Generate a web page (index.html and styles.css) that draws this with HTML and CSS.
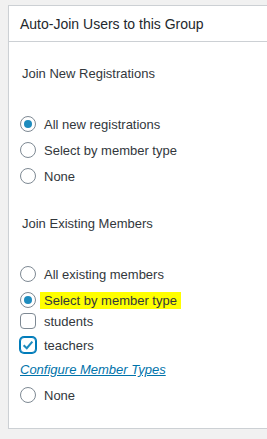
FILE: index.html
```html
<!DOCTYPE html>
<html lang="en">
<head>
    <meta charset="UTF-8">
    <meta name="viewport" content="width=device-width, initial-scale=1.0">
    <title>Auto-Join Users to this Group</title>
    <link rel="stylesheet" href="styles.css">
</head>
<body>
    <div class="postbox">
        <h2 class="hndle">Auto-Join Users to this Group</h2>
        <div class="inside">
            <p class="group-title">Join New Registrations</p>
            <ul class="choices">
                <li class="opt"><span class="radio checked"></span>All new registrations</li>
                <li class="opt"><span class="radio"></span>Select by member type</li>
                <li class="opt"><span class="radio"></span>None</li>
            </ul>

            <p class="group-title">Join Existing Members</p>
            <ul class="choices">
                <li class="opt"><span class="radio"></span>All existing members</li>
                <li class="opt"><span class="radio checked"></span><span class="mark">Select by member type</span></li>
            </ul>
            <ul class="member-types">
                <li class="opt"><span class="check"></span>students</li>
                <li class="opt"><span class="check checked">
                    <svg viewBox="0 0 16 16" width="14" height="14"><path d="M3 8.2 L6.6 11.6 L13 4.2" fill="none" stroke="#1e8cbe" stroke-width="2.4"/></svg>
                </span>teachers</li>
                <li class="opt"><a href="#" class="config-link">Configure Member Types</a></li>
            </ul>
            <ul class="choices">
                <li class="opt"><span class="radio"></span>None</li>
            </ul>
        </div>
    </div>
</body>
</html>
```

FILE: styles.css
```css
* {
    margin: 0;
    padding: 0;
    box-sizing: border-box;
}

body {
    font-family: "Liberation Sans", Arial, sans-serif;
    font-size: 13px;
    color: #32373c;
    background-color: #f1f1f1;
    padding: 5px 0 0 8px;
}

/* box runs off the right edge, so no right border */
.postbox {
    height: 424px;
    background-color: #fff;
    border: 1px solid #ccd0d4;
    border-right: none;
    box-shadow: 0 1px 1px rgba(0, 0, 0, 0.04);
}

.hndle {
    font-size: 14px;
    font-weight: normal;
    color: #23282d;
    height: 36px;
    line-height: 36px;
    padding: 0 11px;
    border-bottom: 1px solid #ccd0d4;
}

.inside {
    padding: 0 11px;
}

.group-title {
    height: 20px;
    line-height: 20px;
    margin: 22px 0 27px 2px;
    color: #32373c;
}

.choices,
.member-types {
    list-style: none;
}

.choices + .group-title {
    margin-top: 25px;
}

.opt {
    display: flex;
    align-items: center;
    height: 26px;
}

.member-types {
    margin-top: -4px;
}

.member-types .opt {
    height: 24px;
}

.member-types .opt:last-child {
    height: 25px;
}

.radio,
.check {
    flex: none;
    width: 16px;
    height: 16px;
    margin-right: 8px;
    border: 1px solid #7e8993;
    background-color: #fff;
    display: flex;
    align-items: center;
    justify-content: center;
}

.radio {
    border-radius: 50%;
}

.radio.checked::before {
    content: "";
    width: 8px;
    height: 8px;
    border-radius: 50%;
    background-color: #1e8cbe;
}

.check {
    border-radius: 4px;
}

.check.checked {
    border-color: #007cba;
    box-shadow: 0 0 0 1px #007cba;
}

.mark {
    background-color: #ffff00;
    margin-left: -4px;
    padding: 2px 4px;
    line-height: 13px;
}

.config-link {
    color: #0073aa;
    font-style: italic;
    text-decoration: underline;
}
```
